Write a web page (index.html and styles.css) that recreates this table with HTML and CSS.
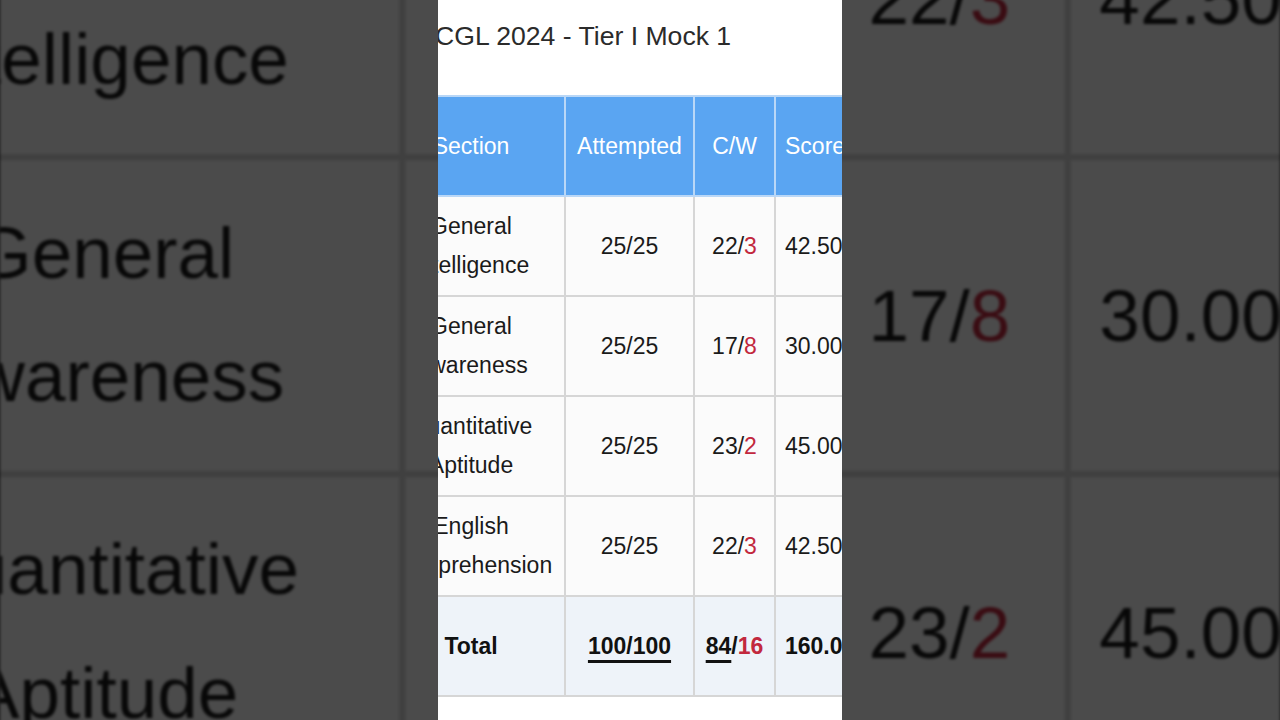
FILE: index.html
```html
<!DOCTYPE html>
<html lang="en">
<head>
  <meta charset="UTF-8">
  <title>SSC CGL 2024 - Tier I Mock 1</title>
  <meta name="viewport" content="width=device-width, initial-scale=1.0" />
  <link rel="stylesheet" href="styles.css">
</head>
<body>
  <div class="backdrop"></div>

  <main class="frame">
    <h1 class="title">SSC CGL 2024 - Tier I Mock 1</h1>

    <table class="scores">
      <colgroup>
        <col class="c-section">
        <col class="c-attempted">
        <col class="c-cw">
        <col class="c-score">
      </colgroup>
      <thead>
        <tr>
          <th class="section">Section</th>
          <th>Attempted</th>
          <th>C/W</th>
          <th class="score">Score</th>
        </tr>
      </thead>
      <tbody>
        <tr>
          <td class="section">General<br>Intelligence</td>
          <td>25/25</td>
          <td>22/<span class="wrong">3</span></td>
          <td class="score">42.50</td>
        </tr>
        <tr>
          <td class="section">General<br>Awareness</td>
          <td>25/25</td>
          <td>17/<span class="wrong">8</span></td>
          <td class="score">30.00</td>
        </tr>
        <tr>
          <td class="section">Quantitative<br>Aptitude</td>
          <td>25/25</td>
          <td>23/<span class="wrong">2</span></td>
          <td class="score">45.00</td>
        </tr>
        <tr>
          <td class="section">English<br>Comprehension</td>
          <td>25/25</td>
          <td>22/<span class="wrong">3</span></td>
          <td class="score">42.50</td>
        </tr>
        <tr class="total">
          <td class="section">Total</td>
          <td><span class="u">100/100</span></td>
          <td><span class="u">84</span>/<span class="wrong">16</span></td>
          <td class="score">160.00</td>
        </tr>
      </tbody>
    </table>
  </main>

  <script>
    // the blown-up, dimmed copy behind the video frame
    const frame = document.querySelector('.frame');
    const copy = frame.cloneNode(true);
    copy.setAttribute('aria-hidden', 'true');
    document.querySelector('.backdrop').appendChild(copy);
  </script>
</body>
</html>
```

FILE: styles.css
```css
body {
  margin: 0;
  height: 720px;
  overflow: hidden;
  display: flex;
  justify-content: center;
  background: #4c4c4c;
  font-family: "Liberation Sans", Arial, sans-serif;
  color: #1a1a1a;
}

.frame {
  position: relative;
  z-index: 1;
  width: 404px;
  height: 720px;
  flex-shrink: 0;
  overflow: hidden;
  background: #fff;
}

.backdrop {
  position: fixed;
  inset: 0;
  overflow: hidden;
  display: flex;
  justify-content: center;
  align-items: center;
}

.backdrop .frame {
  z-index: 0;
  transform: scale(3.168);
  filter: blur(0.45px);
}

.backdrop::after {
  content: "";
  position: absolute;
  inset: 0;
  background: rgba(0, 0, 0, 0.7);
}

.title {
  margin: 21px 0 0 -65px;
  font-size: 26.6px;
  font-weight: 400;
  line-height: 30px;
  white-space: nowrap;
  color: #2b2b2b;
}

.scores {
  margin: 44px 0 0 -58px;
  table-layout: fixed;
  width: 528px;
  border-collapse: collapse;
  font-size: 23px;
  white-space: nowrap;
}

.c-section { width: 184px; }
.c-attempted { width: 129px; }
.c-cw { width: 81px; }
.c-score { width: 134px; }

.scores tr {
  height: 100px;
}

.scores th,
.scores td {
  padding: 0 8px;
  text-align: center;
  vertical-align: middle;
  border: 2px solid #d6d6d6;
}

.scores th {
  background: #5aa5f2;
  color: #fff;
  font-weight: 400;
  border-color: #b9d7f7;
}

.scores td {
  background: #fbfbfb;
}

.scores .section {
  padding: 0 10px 0 6px;
  line-height: 39px;
}

.scores .score {
  text-align: left;
  padding-left: 9px;
}

.wrong {
  color: #c2283e;
}

.total td {
  background: #eef3f9;
  font-weight: 700;
  color: #111;
}

.u {
  text-decoration: underline;
  text-decoration-thickness: 3px;
  text-underline-offset: 6px;
}
```
